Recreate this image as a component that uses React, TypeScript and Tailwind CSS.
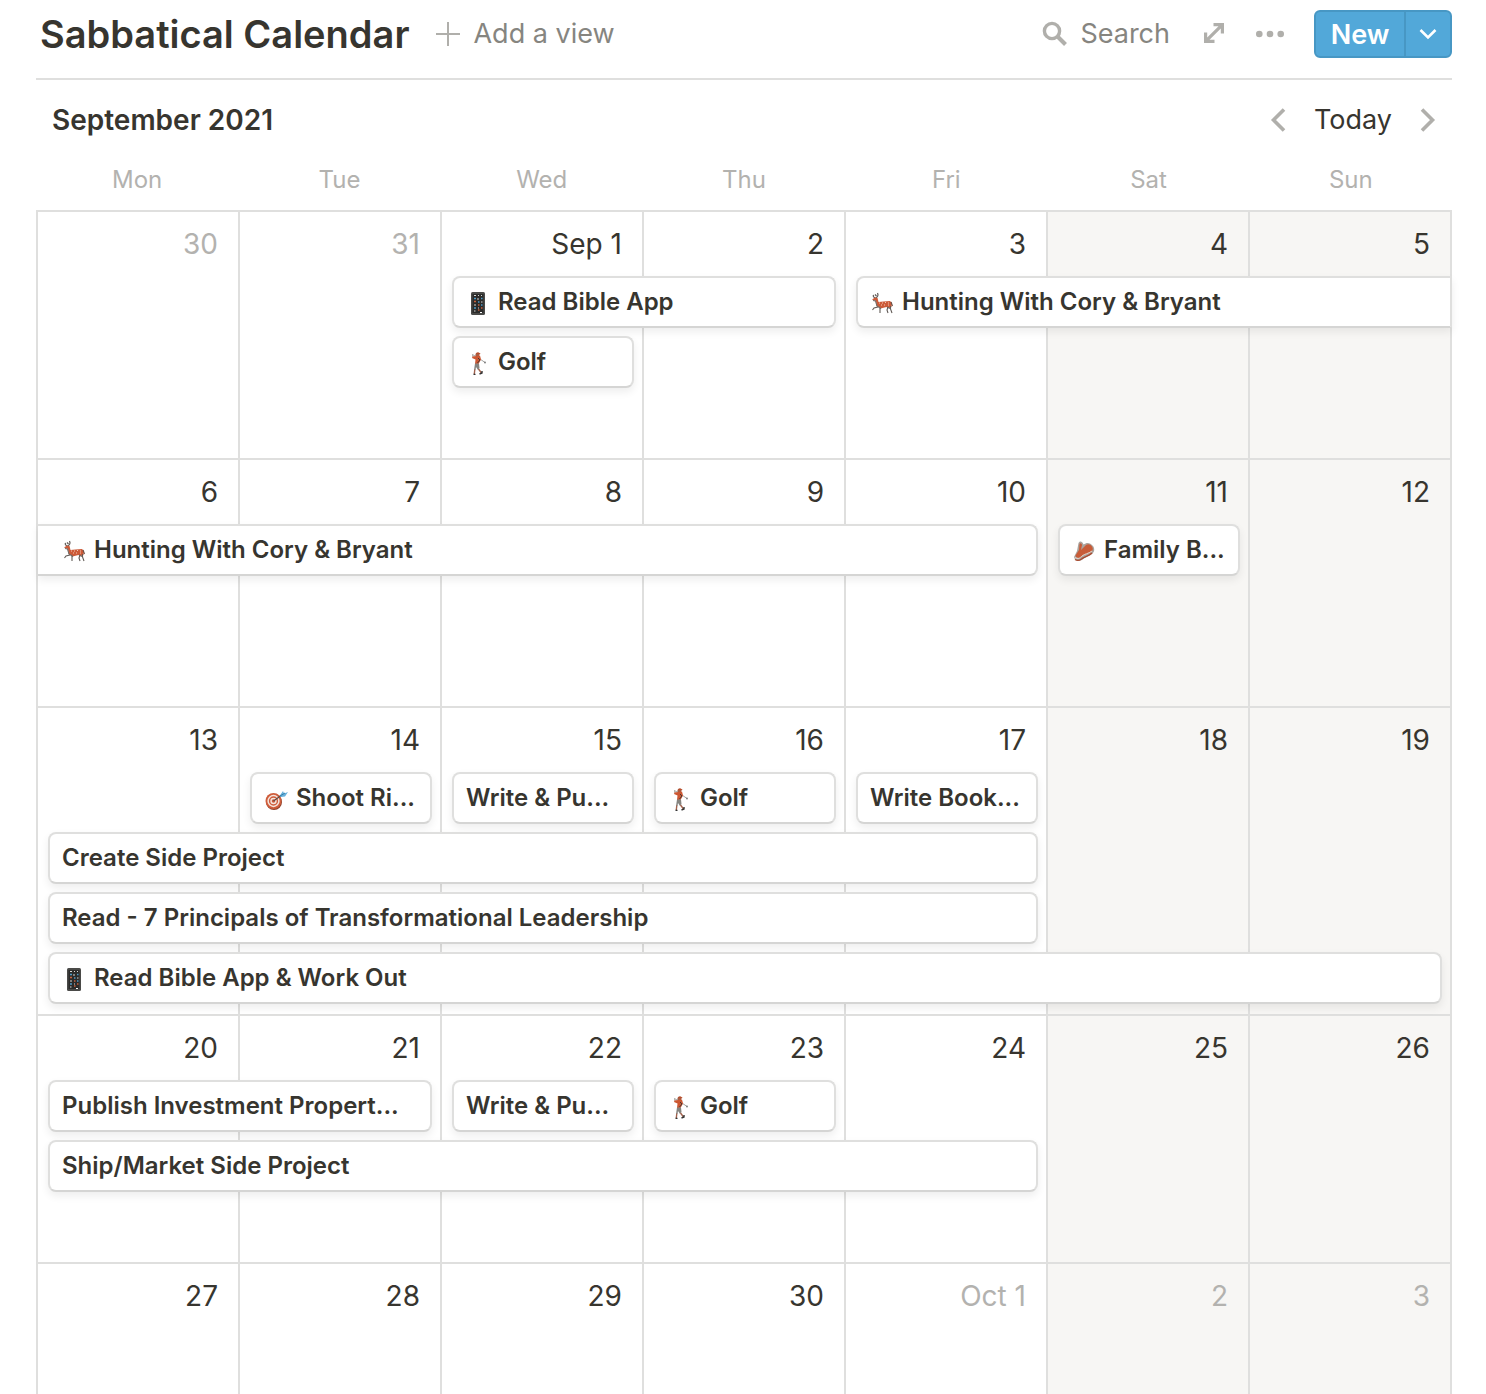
import type { ReactNode } from "react";

type IconName = "phone" | "golf" | "deer" | "meat" | "target";

type CalendarEvent = {
  title: string;
  start: number;
  span: number;
  lane: number;
  icon?: IconName;
  fromPrev?: boolean;
  toNext?: boolean;
};

type Week = {
  days: string[];
  muted?: number[];
  events: CalendarEvent[];
};

const weekdays = ["Mon", "Tue", "Wed", "Thu", "Fri", "Sat", "Sun"];

const weeks: Week[] = [
  {
    days: ["30", "31", "Sep 1", "2", "3", "4", "5"],
    muted: [0, 1],
    events: [
      { title: "Read Bible App", icon: "phone", start: 3, span: 2, lane: 1 },
      { title: "Hunting With Cory & Bryant", icon: "deer", start: 5, span: 3, lane: 1, toNext: true },
      { title: "Golf", icon: "golf", start: 3, span: 1, lane: 2 },
    ],
  },
  {
    days: ["6", "7", "8", "9", "10", "11", "12"],
    events: [
      { title: "Hunting With Cory & Bryant", icon: "deer", start: 1, span: 5, lane: 1, fromPrev: true },
      { title: "Family B...", icon: "meat", start: 6, span: 1, lane: 1 },
    ],
  },
  {
    days: ["13", "14", "15", "16", "17", "18", "19"],
    events: [
      { title: "Shoot Ri...", icon: "target", start: 2, span: 1, lane: 1 },
      { title: "Write & Pu...", start: 3, span: 1, lane: 1 },
      { title: "Golf", icon: "golf", start: 4, span: 1, lane: 1 },
      { title: "Write Book...", start: 5, span: 1, lane: 1 },
      { title: "Create Side Project", start: 1, span: 5, lane: 2 },
      { title: "Read - 7 Principals of Transformational Leadership", start: 1, span: 5, lane: 3 },
      { title: "Read Bible App & Work Out", icon: "phone", start: 1, span: 7, lane: 4 },
    ],
  },
  {
    days: ["20", "21", "22", "23", "24", "25", "26"],
    events: [
      { title: "Publish Investment Propert...", start: 1, span: 2, lane: 1 },
      { title: "Write & Pu...", start: 3, span: 1, lane: 1 },
      { title: "Golf", icon: "golf", start: 4, span: 1, lane: 1 },
      { title: "Ship/Market Side Project", start: 1, span: 5, lane: 2 },
    ],
  },
  {
    days: ["27", "28", "29", "30", "Oct 1", "2", "3"],
    muted: [4, 5, 6],
    events: [],
  },
];

const icons: Record<IconName, ReactNode> = {
  phone: (
    <>
      <rect x="4" y="1" width="14" height="23" rx="1.5" fill="#4a4a48" />
      <rect x="5.5" y="3" width="11" height="19" fill="#2b2b2a" />
      <path d="M7 4.5h2M11 4.5h1M14 4.5h1M10 8h2M7 14h2M14 11h1.5M11 17h1M7 20h1.5" stroke="#d6d6d3" strokeWidth="1.2" />
      <path d="M7 7.5h2M14 7.5h1.5M11 11h1.5M14 14h1.5M7 17h2" stroke="#4c9bc7" strokeWidth="1.4" />
      <path d="M7 10.5h2M11 14h1.5M14 17h1.5M11 19h1.5" stroke="#c8603c" strokeWidth="1.4" />
      <path d="M13 21.5h2" stroke="#fff" strokeWidth="1.2" />
    </>
  ),
  golf: (
    <>
      <path d="M6 6 5.5 3.5 8 5l2-1.5M13 8l5 3.5" fill="none" stroke="#8b8b88" strokeWidth="0.8" />
      <circle cx="18" cy="11.5" r="0.9" fill="#777" />
      <circle cx="10.5" cy="3.5" r="2" fill="#a85d43" />
      <path d="M9 2.5c1-1.5 3.5-1.5 4.5.5l-2 .3z" fill="#b84e2c" />
      <path d="M5.5 5.5 9 5l4-.5 1 4-2.5 4.5H8L8.5 8.5 5 7z" fill="#cc5732" />
      <path d="m11 7 2 2-2.5 3" fill="none" stroke="#4a3832" />
      <path d="M8 12.5h4l.5 4.5-1.5 2-2-3-.5 3H7z" fill="#858480" />
      <path d="M7.8 18.5 7.3 23M11.5 18l3 4" stroke="#a1624d" strokeWidth="1.4" />
      <path d="M6.5 23.5h2M12.5 23l2.5-1v-2" fill="none" stroke="#333" strokeWidth="1.4" />
    </>
  ),
  deer: (
    <>
      <path d="M4 7C1.5 5.5 2 4 3 4.5M4.500 7C7 6 7.5 4 6.5 2M5.500 5 4 3.500" fill="none" stroke="#5f5a56" strokeWidth="1.2" />
      <path d="M1 8.5 4 6.5 6.5 7l1 4 5-.5 6.5-.5 2 2-.5 4-2 1-3-1-6 1.5-4-2.5L5 10z" fill="#cc5a38" />
      <path d="M2 9.5 4.500 10 6 15l4 2.500M16 16l3 1.500" fill="none" stroke="#716c68" strokeWidth="1.1" />
      <path d="M7 16l-4 1-1.500 2M9 17v5M17 16l-1 3 1 3M19.500 15v3l1.500 4" fill="none" stroke="#625b57" strokeWidth="1.1" />
      <path d="M8 12h1M11 12h1M14 11.500h1M17 12h1M10 14h1M13 14h1M17 14h1" stroke="#f2c5b2" />
      <path d="m20 11 1.500 4" stroke="#6b5148" strokeWidth="1.2" />
    </>
  ),
  meat: (
    <>
      <path d="M1 18 4 12 5.500 4c1-2.500 4-2 5 1.500C14 3 17 3.500 20 7c2 3 1.500 6-1 8-3 2-7 3-10 6-3 1.500-7 1-8-3z" fill="#aaa39d" />
      <path d="M2.500 16.500 6 11l.5-6c.5-1.500 2.500-.5 2.500 1L8 11l5-5c2.500-1.500 5-.5 6.500 2.500 1 2-.5 4.500-3 5.500-4 1.500-6.500 1.500-9 5-2.500 0-5-.5-5-2.500z" fill="#c85c38" />
      <path d="M2 18.500c3 2 5 .5 7-1.500 3-2.500 6-2 10-5" fill="none" stroke="#e3d8d1" />
      <path d="M2 20.500c2.500 1.500 4.500 1 6.500-.5 3-2.500 7-2.500 10.500-6" fill="none" stroke="#a84b30" strokeWidth="1.4" />
    </>
  ),
  target: (
    <>
      <circle cx="9" cy="15" r="8" fill="#8d402b" />
      <circle cx="8.5" cy="14" r="8" fill="#cf5d3b" />
      <circle cx="8.5" cy="14" r="5.4" fill="none" stroke="#f4e5de" strokeWidth="1.5" />
      <circle cx="8.5" cy="14" r="2.5" fill="none" stroke="#f4e5de" strokeWidth="1.4" />
      <path d="m8.500 14 9-6.500" stroke="#5d4740" strokeWidth="1.2" />
      <path d="m14.500 9 3.500-5 1 2.500L23 5l-3 4.500-4 .5z" fill="#67b1dc" />
      <path d="m15 9 5-3" stroke="#3680a9" />
    </>
  ),
};

const EventIcon = ({ name }: { name: IconName }) => (
  <svg viewBox="-1 -2 24 26" className="mr-2 h-[26px] w-6 shrink-0" aria-hidden="true">
    {icons[name]}
  </svg>
);

const EventCard = ({ event }: { event: CalendarEvent }) => {
  const { title, icon, start, span, lane, fromPrev, toNext } = event;
  const left = fromPrev ? "border-l-0 pl-6" : "ml-[10px] rounded-l-lg border-l-2 pl-3";
  const right = toNext ? "border-r-2" : "mr-[10px] rounded-r-lg border-r-2";

  return (
    <button
      className={`mb-2 flex h-[52px] min-w-0 items-center border-y-2 border-[#dfdfde] border-b-[#d5d5d4] bg-white pr-3 text-left shadow-[0_4px_8px_rgba(15,15,15,0.07)] ${left} ${right}`}
      style={{ gridColumn: `${start} / span ${span}`, gridRow: lane + 1 }}
    >
      {icon && <EventIcon name={icon} />}
      <span className="whitespace-nowrap text-2xl font-semibold">{title}</span>
    </button>
  );
};

const WeekRow = ({ week }: { week: Week }) => (
  <div className="grid min-h-[248px] grid-cols-7 grid-rows-[64px_auto_auto_auto_auto_minmax(4px,1fr)]">
    {week.days.map((day, i) => (
      <div
        key={i}
        className={`row-span-full border-r-2 border-b-2 border-[#dfdfde] ${i > 4 ? "bg-[#f7f6f4]" : ""}`}
        style={{ gridColumn: i + 1 }}
      >
        <div
          className={`flex h-16 items-center justify-end pr-5 text-[28px] ${
            week.muted?.includes(i) ? "text-[#b3b2af]" : ""
          }`}
        >
          {day}
        </div>
      </div>
    ))}
    {week.events.map((event) => (
      <EventCard key={`${event.start}-${event.lane}`} event={event} />
    ))}
  </div>
);

const Header = () => (
  <header className="flex items-center border-b-2 border-[#dfdfde] pt-[10px] pb-5">
    <h1 className="pl-1 text-[38px] leading-[48px] font-semibold whitespace-nowrap">Sabbatical Calendar</h1>
    <button className="ml-[26px] flex items-center gap-3 text-[27px] text-[#868580]">
      <svg viewBox="0 0 26 26" className="size-[26px]" stroke="#b0afab" strokeWidth="2" aria-hidden="true">
        <path d="M13 1v24M1 13h24" />
      </svg>
      Add a view
    </button>
    <div className="ml-auto flex items-center">
      <button className="flex items-center gap-3 text-[27px] text-[#868580]">
        <svg viewBox="0 0 26 26" className="size-[26px]" fill="none" stroke="#b0afab" aria-hidden="true">
          <circle cx="10" cy="10" r="7.6" strokeWidth="3.4" />
          <path d="m15.5 15.5 8 8" strokeWidth="4" />
        </svg>
        Search
      </button>
      <button aria-label="Open as full page" className="ml-8">
        <svg viewBox="0 0 24 24" className="size-6" fill="#b0afab" aria-hidden="true">
          <path d="M11.500 1H22v10.500h-3.200V6.500L7.500 17.800h5V21H2V10.500h3.200v5L16.500 4.200h-5z" />
        </svg>
      </button>
      <button aria-label="More options" className="ml-[30px]">
        <svg viewBox="0 0 28 8" className="h-2 w-7" fill="#b0afab" aria-hidden="true">
          <circle cx="3.3" cy="4" r="3.3" />
          <circle cx="14" cy="4" r="3.3" />
          <circle cx="24.7" cy="4" r="3.3" />
        </svg>
      </button>
      <div className="ml-[30px] flex h-12 w-[138px] overflow-hidden rounded-md border-2 border-[#4797c4] bg-[#52a8d9] text-white">
        <button className="flex-1 text-[27px] leading-none font-semibold">New</button>
        <button aria-label="More ways to create" className="flex w-[46px] items-center justify-center border-l-2 border-[#4797c4]">
          <svg viewBox="0 0 18 12" className="h-3 w-[18px]" fill="none" stroke="currentColor" strokeWidth="2.6" aria-hidden="true">
            <path d="M1.500 2 9 9.500 16.500 2" />
          </svg>
        </button>
      </div>
    </div>
  </header>
);

const MonthNav = () => (
  <div className="flex h-20 items-center pl-4">
    <h2 className="text-[28px] font-semibold">September 2021</h2>
    <div className="ml-auto flex items-center gap-7 pr-4">
      <button aria-label="Previous month">
        <svg viewBox="0 0 16 24" className="h-6 w-4" fill="none" stroke="#b0afab" strokeWidth="3.6" aria-hidden="true">
          <path d="M14 1.500 3.500 12 14 22.500" />
        </svg>
      </button>
      <button className="text-[27px]">Today</button>
      <button aria-label="Next month">
        <svg viewBox="0 0 16 24" className="h-6 w-4" fill="none" stroke="#b0afab" strokeWidth="3.6" aria-hidden="true">
          <path d="M2 1.500 12.500 12 2 22.500" />
        </svg>
      </button>
    </div>
  </div>
);

export default function App() {
  return (
    <main className="h-screen overflow-hidden bg-white pr-[34px] pl-9 font-['Inter',sans-serif] text-[#37352f]">
      <Header />
      <MonthNav />
      <div className="mb-[10px] grid h-10 grid-cols-7 items-center text-center text-2xl text-[#b3b2af]">
        {weekdays.map((day) => (
          <div key={day}>{day}</div>
        ))}
      </div>
      <div className="border-t-2 border-l-2 border-[#dfdfde]">
        {weeks.map((week) => (
          <WeekRow key={week.days[0]} week={week} />
        ))}
      </div>
    </main>
  );
}
